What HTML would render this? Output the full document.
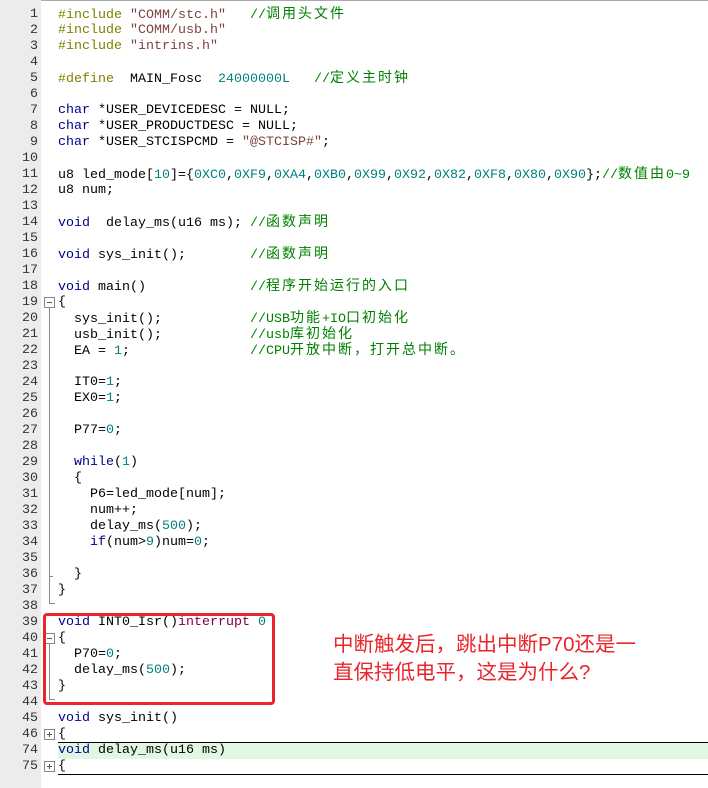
<!DOCTYPE html><html><head><meta charset="utf-8"><style>
body{margin:0;width:708px;height:788px;background:#fff;position:relative;overflow:hidden;font-family:"Liberation Mono","Noto Sans CJK SC",monospace;font-size:13.33px}
#g{position:absolute;left:0;top:0;width:41px;height:788px;background:#ececec}
.r{position:absolute;left:0;height:16px;line-height:16px;white-space:pre;width:708px}
.n{position:absolute;left:0;width:38px;text-align:right;color:#333}
.c{position:absolute;left:58px}
.k{color:#00008b}.p{color:#808000}.s{color:#804040}.m{color:#008000}.d{color:#008080}.i{color:#800040}
b{font-weight:normal;font-size:14px;letter-spacing:2px}
.fb{position:absolute;left:44px;width:11px;height:11px;border:1px solid #888;background:#fff;box-sizing:border-box}
.fb::before{content:"";position:absolute;left:2px;top:4px;width:5px;height:1px;background:#555}
.pl::after{content:"";position:absolute;left:4px;top:2px;width:1px;height:5px;background:#555}
.vl{position:absolute;left:49px;width:1px;background:#888}
</style></head><body>
<div style="position:absolute;left:0;top:0;width:708px;height:1px;background:#aaa"></div>
<div id="g"></div>
<div style="position:absolute;left:0;top:3px">
<div class="r" style="top:4px"><span class="n">1</span><span class="c"><span class="p">#include</span> <span class="s">"COMM/stc.h"</span>   <span class="m">//<b>调用头文件</b></span></span></div>
<div class="r" style="top:20px"><span class="n">2</span><span class="c"><span class="p">#include</span> <span class="s">"COMM/usb.h"</span></span></div>
<div class="r" style="top:36px"><span class="n">3</span><span class="c"><span class="p">#include</span> <span class="s">"intrins.h"</span></span></div>
<div class="r" style="top:52px"><span class="n">4</span></div>
<div class="r" style="top:68px"><span class="n">5</span><span class="c"><span class="p">#define</span>  MAIN_Fosc  <span class="d">24000000L</span>   <span class="m">//<b>定义主时钟</b></span></span></div>
<div class="r" style="top:84px"><span class="n">6</span></div>
<div class="r" style="top:100px"><span class="n">7</span><span class="c"><span class="k">char</span> *USER_DEVICEDESC = NULL;</span></div>
<div class="r" style="top:116px"><span class="n">8</span><span class="c"><span class="k">char</span> *USER_PRODUCTDESC = NULL;</span></div>
<div class="r" style="top:132px"><span class="n">9</span><span class="c"><span class="k">char</span> *USER_STCISPCMD = <span class="s">"@STCISP#"</span>;</span></div>
<div class="r" style="top:148px"><span class="n">10</span></div>
<div class="r" style="top:164px"><span class="n">11</span><span class="c">u8 led_mode[<span class="d">10</span>]={<span class="d">0XC0</span>,<span class="d">0XF9</span>,<span class="d">0XA4</span>,<span class="d">0XB0</span>,<span class="d">0X99</span>,<span class="d">0X92</span>,<span class="d">0X82</span>,<span class="d">0XF8</span>,<span class="d">0X80</span>,<span class="d">0X90</span>};<span class="m">//<b>数值由</b>0~9</span></span></div>
<div class="r" style="top:180px"><span class="n">12</span><span class="c">u8 num;</span></div>
<div class="r" style="top:196px"><span class="n">13</span></div>
<div class="r" style="top:212px"><span class="n">14</span><span class="c"><span class="k">void</span>  delay_ms(u16 ms); <span class="m">//<b>函数声明</b></span></span></div>
<div class="r" style="top:228px"><span class="n">15</span></div>
<div class="r" style="top:244px"><span class="n">16</span><span class="c"><span class="k">void</span> sys_init();        <span class="m">//<b>函数声明</b></span></span></div>
<div class="r" style="top:260px"><span class="n">17</span></div>
<div class="r" style="top:276px"><span class="n">18</span><span class="c"><span class="k">void</span> main()             <span class="m">//<b>程序开始运行的入口</b></span></span></div>
<div class="r" style="top:292px"><span class="n">19</span><span class="c">{</span></div>
<div class="r" style="top:308px"><span class="n">20</span><span class="c">  sys_init();           <span class="m">//USB<b>功能</b>+IO<b>口初始化</b></span></span></div>
<div class="r" style="top:324px"><span class="n">21</span><span class="c">  usb_init();           <span class="m">//usb<b>库初始化</b></span></span></div>
<div class="r" style="top:340px"><span class="n">22</span><span class="c">  EA = <span class="d">1</span>;               <span class="m">//CPU<b>开放中断，打开总中断。</b></span></span></div>
<div class="r" style="top:356px"><span class="n">23</span></div>
<div class="r" style="top:372px"><span class="n">24</span><span class="c">  IT0=<span class="d">1</span>;</span></div>
<div class="r" style="top:388px"><span class="n">25</span><span class="c">  EX0=<span class="d">1</span>;</span></div>
<div class="r" style="top:404px"><span class="n">26</span></div>
<div class="r" style="top:420px"><span class="n">27</span><span class="c">  P77=<span class="d">0</span>;</span></div>
<div class="r" style="top:436px"><span class="n">28</span></div>
<div class="r" style="top:452px"><span class="n">29</span><span class="c">  <span class="k">while</span>(<span class="d">1</span>)</span></div>
<div class="r" style="top:468px"><span class="n">30</span><span class="c">  {</span></div>
<div class="r" style="top:484px"><span class="n">31</span><span class="c">    P6=led_mode[num];</span></div>
<div class="r" style="top:500px"><span class="n">32</span><span class="c">    num++;</span></div>
<div class="r" style="top:516px"><span class="n">33</span><span class="c">    delay_ms(<span class="d">500</span>);</span></div>
<div class="r" style="top:532px"><span class="n">34</span><span class="c">    <span class="k">if</span>(num&gt;<span class="d">9</span>)num=<span class="d">0</span>;</span></div>
<div class="r" style="top:548px"><span class="n">35</span></div>
<div class="r" style="top:564px"><span class="n">36</span><span class="c">  }</span></div>
<div class="r" style="top:580px"><span class="n">37</span><span class="c">}</span></div>
<div class="r" style="top:596px"><span class="n">38</span></div>
<div class="r" style="top:612px"><span class="n">39</span><span class="c"><span class="k">void</span> INT0_Isr()<span class="i">interrupt</span> <span class="d">0</span></span></div>
<div class="r" style="top:628px"><span class="n">40</span><span class="c">{</span></div>
<div class="r" style="top:644px"><span class="n">41</span><span class="c">  P70=<span class="d">0</span>;</span></div>
<div class="r" style="top:660px"><span class="n">42</span><span class="c">  delay_ms(<span class="d">500</span>);</span></div>
<div class="r" style="top:676px"><span class="n">43</span><span class="c">}</span></div>
<div class="r" style="top:692px"><span class="n">44</span></div>
<div class="r" style="top:708px"><span class="n">45</span><span class="c"><span class="k">void</span> sys_init()</span></div>
<div class="r" style="top:724px"><span class="n">46</span><span class="c">{</span></div>
<div style="position:absolute;left:58px;top:740px;width:650px;height:16px;background:#e2f7e2"></div>
<div style="position:absolute;left:58px;top:739px;width:650px;height:1px;background:#000"></div>
<div class="r" style="top:740px"><span class="n">74</span><span class="c"><span class="k">void</span> delay_ms(u16 ms)</span></div>
<div class="r" style="top:756px"><span class="n">75</span><span class="c">{</span></div>
<div style="position:absolute;left:58px;top:771px;width:650px;height:1px;background:#000"></div>
<div class="vl" style="top:305px;height:296px"></div>
<div style="position:absolute;left:49px;top:600px;width:6px;height:1px;background:#888"></div>
<div style="position:absolute;left:49px;top:573px;width:4px;height:1px;background:#888"></div>
<div class="fb" style="top:294px"></div>
<div class="vl" style="top:641px;height:56px"></div>
<div style="position:absolute;left:49px;top:696px;width:6px;height:1px;background:#888"></div>
<div class="fb" style="top:630px"></div>
<div class="fb pl" style="top:726px"></div>
<div class="fb pl" style="top:758px"></div>
</div>
<div style="position:absolute;left:43px;top:613px;width:232px;height:92px;border:3px solid #e8262b;border-radius:4px;box-sizing:border-box"></div>
<div style="position:absolute;left:333px;top:631px;color:#e8262b;font-family:'Liberation Sans','Noto Sans CJK SC',sans-serif;font-size:20.5px;line-height:28px;white-space:nowrap">中断触发后，跳出中断P70还是一<br>直保持低电平，这是为什么?</div>
</body></html>
